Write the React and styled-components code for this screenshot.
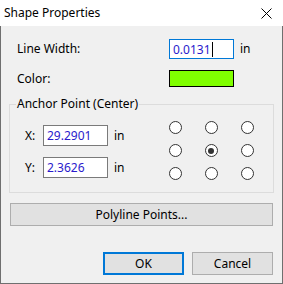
import React from "react";
import styled, { createGlobalStyle } from "styled-components";

const Global = createGlobalStyle`
  html, body { margin: 0; padding: 0; background: #ffffff; }
  body { font-family: "Segoe UI", "Noto Sans", "Open Sans", sans-serif; font-size: 12px; color: #000; }
  * { box-sizing: border-box; }
`;

const Window = styled.div`
  width: 283px;
  height: 284px;
  display: flex;
  flex-direction: column;
`;

const TitleBar = styled.div`
  height: 26px;
  background: #ffffff;
  display: flex;
  align-items: center;
  justify-content: space-between;
  padding-left: 4px;
`;

const Title = styled.span`
  font-size: 12px;
  line-height: 16px;
  margin-top: -1px;
`;

const CloseButton = styled.div`
  width: 46px;
  height: 26px;
  display: flex;
  align-items: center;
  justify-content: center;
  margin-right: -6px;
`;

const Body = styled.div`
  flex: 1;
  background: #f0f0f0;
  border: 1px solid #6f6f6f;
  border-top: none;
  display: flex;
  flex-direction: column;
`;

const FieldRow = styled.div`
  display: grid;
  grid-template-columns: 146px 65px auto;
  column-gap: 6px;
  align-items: center;
  padding-left: 16px;
  margin-top: ${(p) => p.$top}px;
`;

const Label = styled.span`
  line-height: 16px;
`;

const TextBox = styled.div`
  width: 65px;
  height: ${(p) => p.$h || 21}px;
  background: #ffffff;
  border: 1px solid ${(p) => (p.$focused ? "#0078d7" : "#7a7a7a")};
  display: flex;
  align-items: center;
  padding-left: 3px;
  color: #2a1acc;
  font-size: 12px;
`;

const Caret = styled.span`
  display: inline-block;
  width: 1px;
  height: 15px;
  background: #000;
  margin-left: 1px;
`;

const Swatch = styled.div`
  width: 65px;
  height: 17px;
  background: #80ff00;
  border: 1px solid #000;
`;

const GroupBox = styled.div`
  position: relative;
  margin: 17px 8px 0 8px;
  height: 89px;
  border: 1px solid #dcdcdc;
  display: flex;
`;

const Legend = styled.span`
  position: absolute;
  top: -9px;
  left: 6px;
  padding: 0 1px;
  background: #f0f0f0;
  line-height: 16px;
`;

const CoordColumn = styled.div`
  width: 147px;
  display: flex;
  flex-direction: column;
  gap: 11px;
  padding-top: 20px;
  padding-left: 15px;
`;

const CoordRow = styled.div`
  display: grid;
  grid-template-columns: 12px 65px auto;
  column-gap: 6px;
  align-items: center;
`;

const RadioGrid = styled.div`
  display: grid;
  grid-template-columns: repeat(3, 36px);
  grid-auto-rows: 23px;
  margin-top: 11px;
`;

const RadioCell = styled.div`
  display: flex;
  align-items: center;
  justify-content: center;
`;

const Radio = styled.div`
  width: 13px;
  height: 13px;
  border-radius: 50%;
  border: 1px solid #333333;
  background: #ffffff;
  display: flex;
  align-items: center;
  justify-content: center;
  &::after {
    content: "";
    width: 6px;
    height: 6px;
    border-radius: 50%;
    background: #333333;
    display: ${(p) => (p.$checked ? "block" : "none")};
  }
`;

const Button = styled.div`
  height: 23px;
  width: ${(p) => (p.$wide ? "auto" : "81px")};
  background: #e1e1e1;
  border: ${(p) => (p.$default ? "2px solid #0078d7" : "1px solid #adadad")};
  display: flex;
  align-items: center;
  justify-content: center;
  line-height: 16px;
`;

const PolylineButton = styled(Button)`
  margin: 10px 9px 0 9px;
`;

const ButtonBar = styled.div`
  display: flex;
  justify-content: flex-end;
  gap: 8px;
  margin: 26px 9px 0 0;
`;

function CloseIcon() {
  return (
    <svg width="11" height="11" viewBox="0 0 11 11">
      <path d="M0.5 0.5 L10.5 10.5 M10.5 0.5 L0.5 10.5" stroke="#000" strokeWidth="1" fill="none" />
    </svg>
  );
}

export default function App() {
  const radios = [0, 1, 2, 3, 4, 5, 6, 7, 8];
  return (
    <Window>
      <Global />
      <TitleBar>
        <Title>Shape Properties</Title>
        <CloseButton>
          <CloseIcon />
        </CloseButton>
      </TitleBar>
      <Body>
        <FieldRow $top={13}>
          <Label>Line Width:</Label>
          <TextBox $focused $h={20}>
            0.0131<Caret />
          </TextBox>
          <Label>in</Label>
        </FieldRow>
        <FieldRow $top={11}>
          <Label>Color:</Label>
          <Swatch />
        </FieldRow>
        <GroupBox>
          <Legend>Anchor Point (Center)</Legend>
          <CoordColumn>
            <CoordRow>
              <Label>X:</Label>
              <TextBox>29.2901</TextBox>
              <Label>in</Label>
            </CoordRow>
            <CoordRow>
              <Label>Y:</Label>
              <TextBox>2.3626</TextBox>
              <Label>in</Label>
            </CoordRow>
          </CoordColumn>
          <RadioGrid>
            {radios.map((i) => (
              <RadioCell key={i}>
                <Radio $checked={i === 4} />
              </RadioCell>
            ))}
          </RadioGrid>
        </GroupBox>
        <PolylineButton $wide>Polyline Points...</PolylineButton>
        <ButtonBar>
          <Button $default>OK</Button>
          <Button>Cancel</Button>
        </ButtonBar>
      </Body>
    </Window>
  );
}
